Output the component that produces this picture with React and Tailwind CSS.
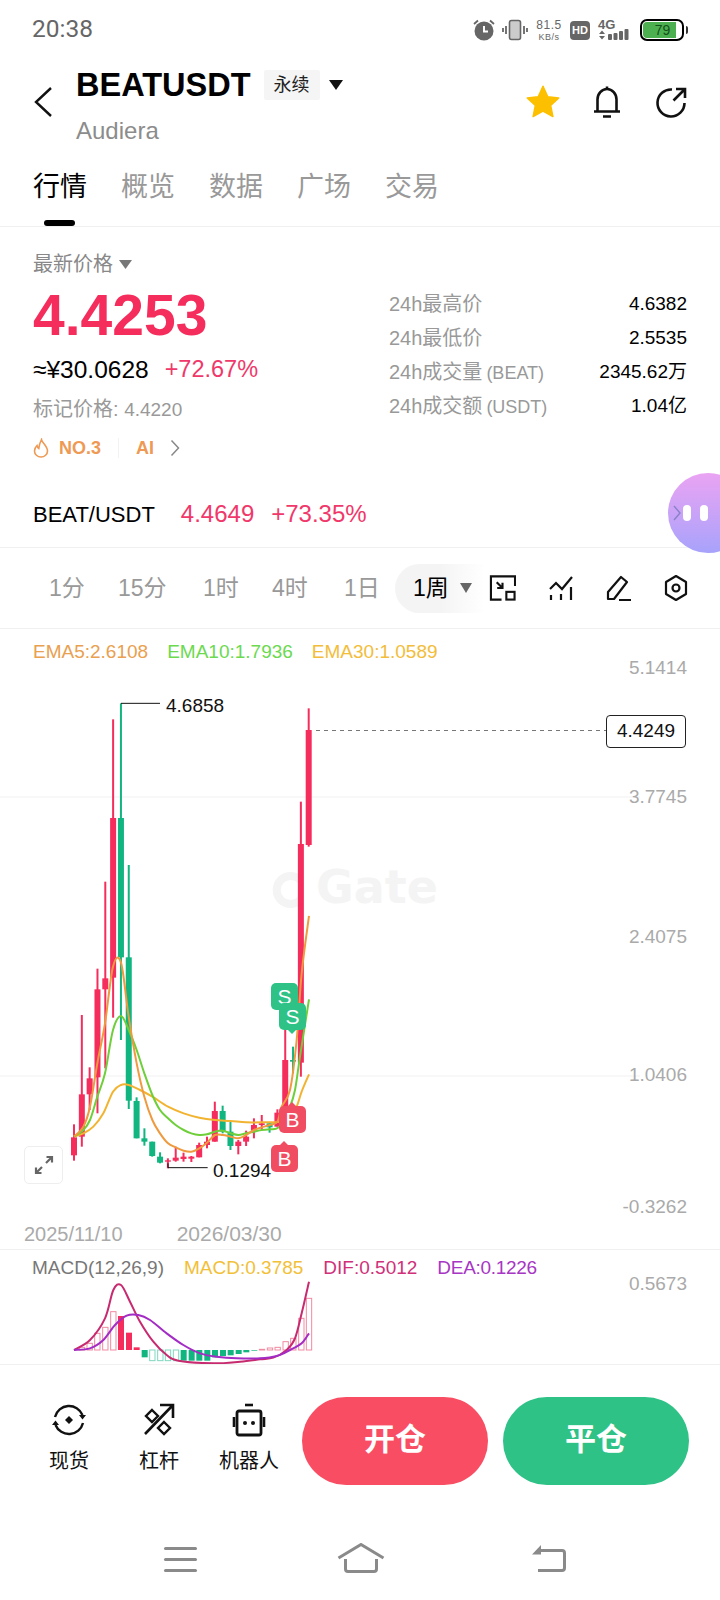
import React from 'react';

const FONT = '"Liberation Sans", "Noto Sans CJK SC", sans-serif';

const RED = '#f52d5c';
const GREEN = '#10b57f';

// candles are kept in crop units (3 units = 1px), [color, wickTop, wickBottom, bodyTop, bodyBottom]
const CANDLES = [
  ['r', 1303, 1412, 1342, 1396],
  ['r', 975, 1370, 1213, 1340],
  ['r', 1132, 1260, 1165, 1213],
  ['r', 836, 1270, 898, 1162],
  ['r', 575, 1135, 865, 898],
  ['r', 88, 983, 384, 863],
  ['g', 40, 1050, 384, 802],
  ['g', 525, 1257, 802, 1232],
  ['g', 1222, 1345, 1233, 1345],
  ['g', 1315, 1367, 1345, 1355],
  ['g', 1355, 1400, 1355, 1398],
  ['g', 1387, 1420, 1400, 1418],
  ['r', 1405, 1435, 1411, 1415],
  ['r', 1370, 1415, 1403, 1412],
  ['r', 1388, 1415, 1400, 1407],
  ['r', 1398, 1416, 1400, 1406],
  ['r', 1358, 1402, 1365, 1402],
  ['r', 1340, 1375, 1355, 1365],
  ['r', 1235, 1355, 1263, 1355],
  ['g', 1247, 1330, 1263, 1325],
  ['g', 1295, 1380, 1325, 1368],
  ['r', 1350, 1393, 1355, 1368],
  ['r', 1322, 1368, 1340, 1355],
  ['r', 1285, 1345, 1305, 1322],
  ['r', 1275, 1318, 1300, 1305],
  ['g', 1300, 1328, 1300, 1312],
  ['r', 1258, 1310, 1268, 1310],
  ['r', 1020, 1260, 1110, 1260],
  ['g', 1070, 1150, 1110, 1115],
  ['r', 335, 1160, 462, 1118],
  ['r', 55, 470, 120, 465],
];

const EMA5 = [[102,1340],[130,1310],[150,1250],[172,1120],[195,1000],[219,830],[243,818],[266,980],[290,1120],[313,1220],[337,1290],[360,1330],[384,1360],[407,1372],[431,1382],[454,1385],[478,1375],[501,1358],[525,1335],[548,1335],[572,1340],[595,1345],[618,1335],[642,1320],[665,1312],[689,1305],[712,1295],[725,1250],[750,1200],[770,1050],[785,850],[807,678]];
const EMA10 = [[102,1340],[130,1320],[150,1290],[172,1220],[195,1150],[219,1020],[243,978],[266,1020],[290,1080],[313,1150],[337,1215],[360,1260],[384,1285],[407,1305],[431,1320],[454,1330],[478,1335],[501,1333],[525,1325],[548,1322],[572,1330],[595,1335],[618,1330],[642,1325],[665,1320],[689,1318],[718,1310],[750,1250],[765,1200],[780,1100],[807,928]];
const EMA30 = [[102,1340],[130,1330],[160,1310],[190,1270],[219,1205],[243,1185],[266,1185],[300,1200],[337,1220],[384,1250],[431,1270],[478,1283],[525,1290],[572,1293],[618,1297],[665,1297],[720,1295],[750,1280],[770,1250],[785,1205],[807,1153]];

// macd bars in crop units: [x, top, bottom, filled, color]
const MACD_BARS = [
  [66, 352, 360, false, 'r'], [89, 340, 360, false, 'r'], [112, 310, 360, false, 'r'], [136, 292, 360, false, 'r'],
  [160, 245, 360, false, 'r'], [183, 258, 360, true, 'r'], [207, 308, 360, true, 'r'], [230, 352, 360, true, 'r'],
  [254, 360, 382, true, 'g'], [277, 360, 392, false, 'g'], [301, 360, 392, false, 'g'], [324, 360, 392, false, 'g'],
  [348, 360, 392, false, 'g'], [371, 360, 392, true, 'g'], [395, 360, 392, true, 'g'], [418, 360, 392, true, 'g'],
  [442, 360, 392, true, 'g'], [465, 360, 382, true, 'g'], [489, 360, 378, true, 'g'], [512, 360, 376, true, 'g'],
  [536, 360, 372, true, 'g'], [559, 360, 367, true, 'g'], [583, 360, 362, true, 'g'],
  [606, 358, 360, false, 'r'], [630, 354, 360, false, 'r'], [653, 352, 360, false, 'r'], [677, 335, 360, false, 'r'],
  [700, 325, 360, false, 'r'], [724, 265, 360, false, 'r'], [747, 205, 360, false, 'r'],
];
const DIF = [[42,360],[90,330],[135,265],[160,180],[183,165],[210,215],[240,275],[280,335],[320,375],[355,392],[460,400],[540,395],[600,388],[640,383],[680,360],[705,325],[725,250],[747,155]];
const DEA = [[42,360],[90,355],[130,330],[165,285],[200,257],[235,255],[270,270],[320,310],[370,345],[420,370],[470,380],[530,385],[600,385],[650,378],[690,360],[725,340],[747,310]];

// catmull-rom to bezier so the lines come out smooth
function smooth(points) {
  let d = `M${points[0][0]} ${points[0][1]}`;
  for (let i = 0; i < points.length - 1; i++) {
    const p0 = points[i - 1] || points[i];
    const p1 = points[i];
    const p2 = points[i + 1];
    const p3 = points[i + 2] || p2;
    const c1x = p1[0] + (p2[0] - p0[0]) / 6;
    const c1y = p1[1] + (p2[1] - p0[1]) / 6;
    const c2x = p2[0] - (p3[0] - p1[0]) / 6;
    const c2y = p2[1] - (p3[1] - p1[1]) / 6;
    d += ` C${c1x} ${c1y} ${c2x} ${c2y} ${p2[0]} ${p2[1]}`;
  }
  return d;
}

function StatusIcons() {
  return (
    <div className="flex items-center text-[#666]">
      <svg width="24" height="24" viewBox="0 0 24 24" className="mr-[6px]">
        <circle cx="12" cy="13" r="9.5" fill="#666" />
        <path d="M12 8v5.500h4" fill="none" stroke="#fff" strokeWidth="2" />
        <path d="M2 6l4-3.500M22 6l-4-3.500" stroke="#666" strokeWidth="1.800" />
      </svg>
      <svg width="26" height="22" viewBox="0 0 26 22" className="mr-[8px]">
        <rect x="7.500" y="1.500" width="11" height="19" rx="2" fill="#ccc" stroke="#666" strokeWidth="1.600" />
        <path d="M4 7v8M1 9v4M22 7v8M25 9v4" stroke="#666" strokeWidth="1.800" />
      </svg>
      <div className="mr-[8px] flex w-[26px] flex-col items-center leading-none tracking-[0.5px]">
        <span className="text-[12px] leading-[13px]">81.5</span>
        <span className="text-[9px] leading-[10px]">KB/s</span>
      </div>
      <div className="mr-[8px] flex h-[19px] w-[20px] items-center justify-center rounded-[4px] bg-[#666] text-[11px] font-bold text-white">HD</div>
      <div className="relative mr-[10px] h-[22px] w-[32px]">
        <span className="absolute left-0 top-0 text-[13px] font-bold leading-[12px]">4G</span>
        <svg width="32" height="22" viewBox="0 0 32 22" className="absolute left-0 top-0">
          <path d="M1 15l3-3.500 3 3.500zM1 17l3 3.500 3-3.500z" fill="#666" />
          <rect x="10" y="15" width="4" height="6" rx="1" fill="#666" />
          <rect x="15.500" y="14" width="4" height="7" rx="1" fill="#666" />
          <rect x="21" y="12" width="4" height="9" rx="1" fill="#666" />
          <rect x="26.500" y="10" width="4" height="11" rx="1" fill="#666" />
        </svg>
      </div>
      <div className="flex items-center">
        <div className="flex h-[22px] w-[44px] rounded-[7px] border-2 border-black p-[1px]">
          <div className="flex h-full w-[33px] items-center justify-center rounded-l-[4px] bg-[#4caf50] pl-[6px] text-[14px] leading-none text-[#14511a]">79</div>
        </div>
        <div className="ml-[2px] h-[8px] w-[2px] rounded-r bg-[#333]" />
      </div>
    </div>
  );
}

function CoinHeader() {
  return (
    <div className="flex h-[103px] items-start pl-[33px] pr-[33px]">
      <svg width="20" height="32" viewBox="0 0 20 32" className="mt-[30px]">
        <path d="M18 2L3 16l15 14" fill="none" stroke="#111" strokeWidth="2.400" />
      </svg>
      <div className="ml-[23px] flex-1">
        <div className="mt-[14px] flex h-[30px] items-center">
          <span className="text-[32.500px] font-bold leading-none text-black">BEATUSDT</span>
          <span className="ml-[13px] flex h-[30px] w-[56px] items-center justify-center rounded-[2px] bg-[#f5f5f5] text-[18px] text-[#222]">永续</span>
          <svg width="14" height="10" viewBox="0 0 14 10" className="ml-[9px]">
            <path d="M0 0h14L7 10z" fill="#111" />
          </svg>
        </div>
        <div className="mt-[19px] text-[24px] leading-none text-[#8c8c8c]">Audiera</div>
      </div>
      <div className="mt-[28px] flex items-center">
        <svg width="36" height="36" viewBox="0 0 24 24">
          <path d="M12 1.500l3.200 7 7.300.8-5.400 5 1.500 7.400L12 18l-6.600 3.700 1.500-7.400-5.400-5 7.300-.8z" fill="#fcc000" stroke="#fcc000" strokeWidth="1" strokeLinejoin="round" />
        </svg>
        <svg width="30" height="34" viewBox="0 0 30 34" className="ml-[31px]">
          <path d="M15 1.500v2.500M2 26.500h26M5.500 26.500V14.500a9.500 10.500 0 0 1 19 0v12M11 31.500h8" fill="none" stroke="#111" strokeWidth="2.600" />
        </svg>
        <svg width="32" height="32" viewBox="0 0 32 32" className="ml-[33px]">
          <path d="M17 3.500A13.500 13.500 0 1 0 29.500 17M18.500 14.500L29.500 3.500M21 3h9v9" fill="none" stroke="#111" strokeWidth="2.600" />
        </svg>
      </div>
    </div>
  );
}

function MarketTabs() {
  const tabs = ['行情', '概览', '数据', '广场', '交易'];
  return (
    <div className="relative h-[68px] border-b border-[#f0f0f0]">
      <div className="flex gap-[34px] px-[33px] pt-[8px]">
        {tabs.map((t, i) => (
          <span key={t} className={`text-[27px] leading-[40px] ${i === 0 ? 'text-black' : 'text-[#999]'}`}>{t}</span>
        ))}
      </div>
      <div className="absolute bottom-0 left-[44px] h-[6px] w-[31px] rounded-full bg-black" />
    </div>
  );
}

function PriceStat({ label, unit, value }) {
  return (
    <div className="flex h-[34px] items-center justify-between">
      <span className="text-[20px] text-[#999]">
        {label}
        {unit && <span className="ml-[4px] text-[18px]">{unit}</span>}
      </span>
      <span className="text-[19px] text-black">{value}</span>
    </div>
  );
}

function PriceBlock() {
  return (
    <div className="relative h-[321px] border-b border-[#f0f0f0] px-[33px] pt-[24px]">
      <div className="flex items-start justify-between">
        <div>
          <div className="flex h-[26px] items-center text-[20px] text-[#888]">
            最新价格
            <svg width="13" height="9" viewBox="0 0 13 9" className="ml-[6px]"><path d="M0 0h13L6.500 9z" fill="#777" /></svg>
          </div>
          <div className="mt-[7px] text-[57px] font-bold leading-[62px] text-[#f52d5c]">4.4253</div>
          <div className="mt-[8px] flex h-[32px] items-center">
            <span className="text-[24.500px] text-black">≈¥30.0628</span>
            <span className="ml-[16px] text-[23.500px] text-[#f0386a]">+72.67%</span>
          </div>
          <div className="mt-[9px] h-[28px] text-[20px] leading-[28px] text-[#999]">标记价格: <span className="text-[19px]">4.4220</span></div>
          <div className="mt-[13px] flex h-[24px] items-center text-[18px] font-bold text-[#ee9a55]">
            <svg width="16" height="20" viewBox="0 0 16 20">
              <path d="M8.500 1.500c.5 3.500 6 6 6 11.500a6.500 6 0 0 1-13 0c0-2.500 1-4 2.500-5.500.3 1.500.8 2.500 1.800 3C6 8 7 4.500 8.500 1.500z" fill="none" stroke="#ee9a55" strokeWidth="1.600" />
            </svg>
            <span className="ml-[10px]">NO.3</span>
            <span className="ml-[17px] h-[20px] w-px bg-[#f2f2f2]" />
            <span className="ml-[17px]">AI</span>
            <svg width="10" height="18" viewBox="0 0 10 18" className="ml-[16px]"><path d="M1.500 1.500L8.500 9l-7 7.500" fill="none" stroke="#888" strokeWidth="1.500" /></svg>
          </div>
        </div>
        <div className="mt-[36px] w-[298px]">
          <PriceStat label="24h最高价" value="4.6382" />
          <PriceStat label="24h最低价" value="2.5535" />
          <PriceStat label="24h成交量" unit="(BEAT)" value="2345.62万" />
          <PriceStat label="24h成交额" unit="(USDT)" value="1.04亿" />
        </div>
      </div>
      <div className="mt-[38px] flex h-[32px] items-center">
        <span className="text-[22px] text-black">BEAT/USDT</span>
        <span className="ml-[26px] text-[24px] text-[#f0386a]">4.4649</span>
        <span className="ml-[17px] text-[24px] text-[#f0386a]">+73.35%</span>
      </div>
      {/* floating helper bubble */}
      <div className="absolute -bottom-[6px] -right-[28px] flex h-[80px] w-[80px] items-center rounded-full bg-gradient-to-b from-[#eaa3f3] to-[#a7a2fb] pl-[5px]">
        <svg width="8" height="16" viewBox="0 0 8 16"><path d="M1 1l6 7-6 7" fill="none" stroke="#8a80c8" strokeWidth="1.400" /></svg>
        <span className="ml-[2px] h-[16px] w-[8px] rounded-full bg-white" />
        <span className="ml-[9px] h-[16px] w-[8px] rounded-full bg-white" />
      </div>
    </div>
  );
}

function Periods() {
  const items = ['1分', '15分', '1时', '4时', '1日'];
  const widths = ['w-[69px]', 'w-[85px]', 'w-[69px]', 'w-[72px]', 'w-[51px]'];
  return (
    <div className="flex h-[81px] items-center border-b border-[#f0f0f0]">
      <div className="flex pl-[49px] text-[23px] text-[#999]">
        {items.map((p, i) => (
          <span key={p} className={widths[i]}>{p}</span>
        ))}
      </div>
      <div className="flex h-[49px] w-[90px] items-center rounded-l-full bg-gradient-to-r from-[#f4f4f4] via-[#f4f4f4] to-white pl-[18px] text-[23px] text-black">
        1周
        <svg width="12" height="10" viewBox="0 0 12 10" className="ml-[11px]"><path d="M0 0h12L6 10z" fill="#666" /></svg>
      </div>
      <div className="ml-[4px] flex items-center gap-[32px]">
        <svg width="27" height="28" viewBox="0 0 28 28">
          <path d="M27 12V2H2v24h11M8 8l6 6M8.500 14H14V8.500" fill="none" stroke="#111" strokeWidth="2.200" />
          <rect x="18" y="18" width="8.500" height="8" fill="none" stroke="#111" strokeWidth="2.200" />
        </svg>
        <svg width="26" height="28" viewBox="0 0 26 28">
          <path d="M2 15l6-6 6 6L24 3" fill="none" stroke="#111" strokeWidth="2.200" />
          <path d="M3 21v5M13 20v6M23 13v13" fill="none" stroke="#111" strokeWidth="2.200" />
        </svg>
        <svg width="26" height="28" viewBox="0 0 26 28">
          <path d="M2 18L15 3l6 5L8 25H2zM13 26h12" fill="none" stroke="#111" strokeWidth="2.200" strokeLinejoin="round" />
        </svg>
        <svg width="24" height="28" viewBox="0 0 24 28">
          <path d="M12 2l10 6v12l-10 6-10-6V8z" fill="none" stroke="#111" strokeWidth="2.200" strokeLinejoin="round" />
          <circle cx="12" cy="14" r="3.500" fill="none" stroke="#111" strokeWidth="2.200" />
        </svg>
      </div>
    </div>
  );
}

function CandleChart() {
  return (
    <svg width="720" height="620" viewBox="0 0 720 620" className="absolute left-0 top-0">
      <path d="M0 168h640M0 447h640" stroke="#f1f1f1" strokeWidth="1" />
      <path d="M316 101.500h290" stroke="#777" strokeWidth="1" strokeDasharray="4 4" />
      {/* watermark ring */}
      <path d="M301 251.500a14 14 0 1 0 0 19" fill="none" stroke="#f4f4f4" strokeWidth="8" />
      <g transform="translate(40 61) scale(0.33333)">
        {CANDLES.map(([c, wt, wb, bt, bb], i) => {
          const x = 102 + i * 23.47;
          const color = c === 'r' ? RED : GREEN;
          return (
            <g key={i} fill={color}>
              <rect x={x - 3} y={wt} width="6" height={wb - wt} />
              <rect x={x - 9} y={bt} width="18" height={Math.max(bb - bt, 4)} />
            </g>
          );
        })}
        <path d={smooth(EMA30)} fill="none" stroke="#f2b430" strokeWidth="6" />
        <path d={smooth(EMA10)} fill="none" stroke="#6fcf3a" strokeWidth="6" />
        <path d={smooth(EMA5)} fill="none" stroke="#ef9a3e" strokeWidth="6" />
        <path d="M243 40H360M384 1420v13H503" fill="none" stroke="#111" strokeWidth="3" />
      </g>
    </svg>
  );
}

function Marker({ kind, up, className }) {
  const bg = kind === 'S' ? 'bg-[#2ec286]' : 'bg-[#f04d63]';
  const tip = kind === 'S' ? 'border-t-[#2ec286]' : 'border-b-[#f04d63]';
  return (
    <div className={`absolute flex h-[27px] w-[27px] items-center justify-center rounded-[5px] text-[21px] leading-none text-white ${bg} ${className}`}>
      {kind}
      <span className={`absolute left-[9px] h-0 w-0 border-x-[4px] border-x-transparent ${up ? '-top-[4px] border-b-[4px]' : '-bottom-[4px] border-t-[4px]'} ${tip}`} />
    </div>
  );
}

function AxisLabel({ className, children }) {
  return <span className={`absolute right-[33px] text-[19px] leading-none text-[#aaa] ${className}`}>{children}</span>;
}

function ChartSection() {
  return (
    <div className="relative h-[621px] border-b border-[#f0f0f0]">
      <CandleChart />
      <div className="relative flex gap-[19px] px-[33px] pt-[13px] text-[19px] leading-[20px]">
        <span className="text-[#e9a04f]">EMA5:2.6108</span>
        <span className="text-[#6cd94f]">EMA10:1.7936</span>
        <span className="text-[#f2bd3a]">EMA30:1.0589</span>
      </div>
      <span className="absolute left-[316px] top-[235px] text-[46px] font-bold leading-none text-[#f4f4f4]" style={{ fontFamily: '"DejaVu Sans", sans-serif' }}>Gate</span>
      <AxisLabel className="top-[29px]">5.1414</AxisLabel>
      <AxisLabel className="top-[158px]">3.7745</AxisLabel>
      <AxisLabel className="top-[298px]">2.4075</AxisLabel>
      <AxisLabel className="top-[436px]">1.0406</AxisLabel>
      <AxisLabel className="top-[568px]">-0.3262</AxisLabel>
      <span className="absolute left-[166px] top-[67px] text-[19px] leading-none text-[#111]">4.6858</span>
      <span className="absolute left-[213px] top-[532px] text-[19px] leading-none text-[#111]">0.1294</span>
      <div className="absolute left-[606px] top-[86px] flex h-[33px] w-[80px] items-center justify-center rounded-[4px] border border-[#222] bg-white text-[19px] text-[#111]">4.4249</div>
      <Marker kind="S" className="left-[271px] top-[354px]" />
      <Marker kind="S" className="left-[279px] top-[374px]" />
      <Marker kind="B" up className="left-[279px] top-[477px]" />
      <Marker kind="B" up className="left-[271px] top-[516px]" />
      <div className="absolute left-[24px] top-[517px] flex h-[38px] w-[39px] items-center justify-center rounded-[5px] border border-[#eee] bg-white">
        <svg width="20" height="20" viewBox="0 0 20 20">
          <path d="M12 8l6-6M12.500 2H18v5.500M8 12l-6 6M2 12.500V18h5.500" fill="none" stroke="#666" strokeWidth="2.200" />
        </svg>
      </div>
      <div className="absolute left-[24px] top-[594px] flex items-baseline gap-[54px] leading-none text-[#aaa]">
        <span className="text-[20px]">2025/11/10</span>
        <span className="text-[21px]">2026/03/30</span>
      </div>
    </div>
  );
}

function MacdSection() {
  return (
    <div className="relative h-[115px] border-b border-[#f0f0f0]">
      <svg width="720" height="114" viewBox="0 0 720 114" className="absolute left-0 top-0">
        <g transform="translate(60 -20) scale(0.33333)">
          {MACD_BARS.map(([x, top, bottom, filled, c], i) => {
            const solid = c === 'r' ? RED : GREEN;
            const pale = c === 'r' ? '#f08aa0' : '#7fd8bf';
            return filled ? (
              <rect key={i} x={x - 9} y={top} width="18" height={bottom - top} fill={solid} />
            ) : (
              <rect key={i} x={x - 8} y={top} width="16" height={bottom - top} fill="#fff" stroke={pale} strokeWidth="3" />
            );
          })}
          <path d={smooth(DIF)} fill="none" stroke="#c82a70" strokeWidth="6" />
          <path d={smooth(DEA)} fill="none" stroke="#a32cc4" strokeWidth="6" />
        </g>
      </svg>
      <div className="relative flex pl-[32px] pt-[8px] text-[19px] leading-[20px]">
        <span className="text-[#777]">MACD(12,26,9)</span>
        <span className="ml-[20px] text-[#f2c037]">MACD:0.3785</span>
        <span className="ml-[20px] text-[#d0307a]">DIF:0.5012</span>
        <span className="ml-[20px] tracking-[-0.3px] text-[#a836c4]">DEA:0.1226</span>
      </div>
      <span className="absolute right-[33px] top-[24px] text-[19px] leading-none text-[#aaa]">0.5673</span>
    </div>
  );
}

function ActionBar() {
  const tools = [
    {
      label: '现货',
      icon: (
        <svg width="34" height="34" viewBox="0 0 34 34">
          <path d="M3 14A14.500 14.500 0 0 1 30.500 12M31 20A14.500 14.500 0 0 1 3.500 22" fill="none" stroke="#111" strokeWidth="2.400" />
          <path d="M27 12h7l-3.500 4.500zM0 22h7l-3.500-4.500z" fill="#111" />
          <path d="M17 13l4 4-4 4-4-4z" fill="#111" />
        </svg>
      ),
    },
    {
      label: '杠杆',
      icon: (
        <svg width="32" height="34" viewBox="0 0 32 34">
          <path d="M2 31L29 3M17 2h13v13" fill="none" stroke="#111" strokeWidth="2.600" />
          <path d="M9 7l6 6-6 6-6-6zM21 19l6 6-6 6-6-6z" fill="none" stroke="#111" strokeWidth="2.400" />
        </svg>
      ),
    },
    {
      label: '机器人',
      icon: (
        <svg width="34" height="34" viewBox="0 0 34 34">
          <path d="M13 2h8" stroke="#111" strokeWidth="2.600" />
          <rect x="5" y="8" width="24" height="24" rx="2" fill="none" stroke="#111" strokeWidth="2.800" />
          <path d="M2 14v10M32 14v10" stroke="#111" strokeWidth="2.600" />
          <circle cx="13" cy="20" r="2" fill="#111" />
          <circle cx="21" cy="20" r="2" fill="#111" />
        </svg>
      ),
    },
  ];
  return (
    <div className="flex h-[121px] items-center pl-[39px] pr-[31px] pt-[30px]">
      <div className="mt-[7px] flex self-start">
        {tools.map((t, i) => (
          <div key={t.label} className={`flex w-[60px] flex-col items-center ${i < 2 ? 'mr-[30px]' : ''}`}>
            <div className="flex h-[36px] items-center justify-center">{t.icon}</div>
            <span className="mt-[10px] whitespace-nowrap text-[20px] leading-[26px] text-[#111]">{t.label}</span>
          </div>
        ))}
      </div>
      <button className="ml-[23px] flex h-[88px] w-[186px] shrink-0 items-center justify-center rounded-full bg-[#f94d63] text-[31px] font-bold text-white">开仓</button>
      <button className="ml-[15px] flex h-[88px] w-[186px] shrink-0 items-center justify-center rounded-full bg-[#2ec286] text-[31px] font-bold text-white">平仓</button>
    </div>
  );
}

function NavBar() {
  return (
    <div className="flex h-[114px] items-start pt-[59px]">
      <div className="ml-[164px] flex h-[29px] w-[33px] flex-col justify-between py-[2px]">
        <div className="h-[3px] rounded bg-[#8a8a8a]" />
        <div className="h-[3px] rounded bg-[#8a8a8a]" />
        <div className="h-[3px] rounded bg-[#8a8a8a]" />
      </div>
      <svg width="48" height="30" viewBox="0 0 48 30" className="-mt-[2px] ml-[140px]">
        <path d="M1.500 15L24 1.500 46.500 15M8.500 16v10q0 2.500 2.500 2.500h26q2.500 0 2.500-2.500V16" fill="none" stroke="#8a8a8a" strokeWidth="3" />
      </svg>
      <svg width="34" height="28" viewBox="0 0 34 28" className="ml-[147px]">
        <path d="M6 25.500h24q2.500 0 2.500-2.500V8q0-2.500-2.500-2.500H8" fill="none" stroke="#8a8a8a" strokeWidth="3" />
        <path d="M9 0v9.500H0z" fill="#8a8a8a" />
      </svg>
    </div>
  );
}

export default function App() {
  return (
    <div className="h-[1600px] w-[720px] overflow-hidden bg-white" style={{ fontFamily: FONT }}>
      <div className="flex h-[56px] items-end justify-between pb-[14px] pl-[32px] pr-[32px]">
        <span className="-mb-[1px] text-[24.500px] leading-[28px] text-[#666]" style={{ fontFamily: 'Roboto, sans-serif' }}>20:38</span>
        <StatusIcons />
      </div>
      <CoinHeader />
      <MarketTabs />
      <PriceBlock />
      <Periods />
      <ChartSection />
      <MacdSection />
      <ActionBar />
      <NavBar />
    </div>
  );
}
